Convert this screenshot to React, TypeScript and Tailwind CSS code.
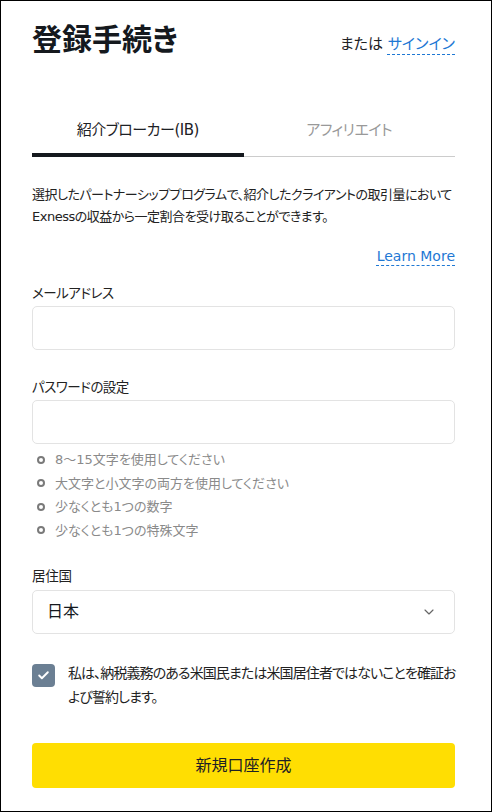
import { useState } from 'react';
import { ChevronDown, Check } from 'lucide-react';

const rules = [
  '8～15文字を使用してください',
  '大文字と小文字の両方を使用してください',
  '少なくとも1つの数字',
  '少なくとも1つの特殊文字',
];

export default function App() {
  const [tab, setTab] = useState(0);
  const [agreed, setAgreed] = useState(true);

  return (
    <div className="w-[492px] h-[812px] border border-black bg-white pl-[31px] pr-[36px] pt-[19px] text-[#1d2125] font-['DejaVu_Sans','Noto_Sans_CJK_JP',sans-serif] [font-feature-settings:'palt']">
      <div className="flex items-center justify-between h-[40px]">
        <h1 className="text-[30px] font-bold leading-[40px] text-[#15191e]">登録手続き</h1>
        <div className="text-[15px] leading-[20px] mt-[8px]">
          または{' '}
          <a href="#" className="text-[#1e78d4] underline decoration-dashed decoration-1 underline-offset-[5px]">
            サインイン
          </a>
        </div>
      </div>

      <div className="mt-[59px] flex border-b border-[#cccccc]">
        {['紹介ブローカー(IB)', 'アフィリエイト'].map((label, i) => (
          <button
            key={label}
            onClick={() => setTab(i)}
            className={`relative flex-1 pb-[15px] text-[15px] leading-[22px] tracking-[-0.5px] text-center ${
              tab === i ? 'text-[#1d2125]' : 'text-[#999999]'
            }`}
          >
            {label}
            {tab === i ? (
              <span className="absolute left-0 right-0 bottom-[-1px] h-[4px] bg-[#15191e]" />
            ) : null}
          </button>
        ))}
      </div>

      <p className="mt-[27px] text-[13px] leading-[22px] tracking-[-0.5px] text-[#222]">
        選択したパートナーシッププログラムで、紹介したクライアントの取引量において
        <br />
        Exnessの収益から一定割合を受け取ることができます。
      </p>

      <div className="mt-[18px] flex justify-end">
        <a href="#" className="text-[14px] leading-[20px] text-[#1e78d4] underline decoration-dashed decoration-1 underline-offset-[4px]">
          Learn More
        </a>
      </div>

      <label className="mt-[17px] block text-[13.5px] leading-[20px] tracking-[-0.5px] text-[#222]">メールアドレス</label>
      <input className="mt-[3px] block w-full h-[44px] rounded-[5px] border border-[#e3e3e3] px-[14px] outline-none" />

      <label className="mt-[27px] block text-[13.5px] leading-[20px] tracking-[-0.5px] text-[#222]">パスワードの設定</label>
      <input type="password" className="mt-[3px] block w-full h-[44px] rounded-[5px] border border-[#e3e3e3] px-[14px] outline-none" />

      <ul className="mt-[4px]">
        {rules.map((r) => (
          <li key={r} className="flex items-center h-[23.5px] text-[13px] text-[#8a8a8a]">
            <span className="ml-[5px] w-[8px] h-[8px] rounded-full border-2 border-[#7a7a7a]" />
            <span className="ml-[10px]">{r}</span>
          </li>
        ))}
      </ul>

      <label className="mt-[24px] block text-[13.5px] leading-[20px] tracking-[-0.3px] text-[#222]">居住国</label>
      <div className="mt-[4px] flex items-center justify-between h-[44px] rounded-[5px] border border-[#e3e3e3] pl-[14px] pr-[17px]">
        <span className="text-[16px] text-[#15191e]">日本</span>
        <ChevronDown className="w-[16px] h-[16px] text-[#666]" strokeWidth={1.75} />
      </div>

      <div className="mt-[27px] flex items-start gap-[13px]">
        <button
          onClick={() => setAgreed(!agreed)}
          className={`mt-[3px] shrink-0 w-[23px] h-[23px] rounded-[4px] flex items-center justify-center ${
            agreed ? 'bg-[#6b7f93]' : 'border border-[#ccc] bg-white'
          }`}
        >
          {agreed ? <Check className="w-[13px] h-[13px] text-white" strokeWidth={3.5} /> : null}
        </button>
        <p className="min-w-0 text-[14px] leading-[24px] tracking-[-0.9px] text-[#222]">
          <span className="block whitespace-nowrap">私は、納税義務のある米国民または米国居住者ではないことを確証お</span>
          <span className="block whitespace-nowrap">よび誓約します。</span>
        </p>
      </div>

      <button className="mt-[34px] w-full h-[45px] rounded-[4px] bg-[#ffde02] text-[16px] text-[#1d2125]">
        新規口座作成
      </button>
    </div>
  );
}
